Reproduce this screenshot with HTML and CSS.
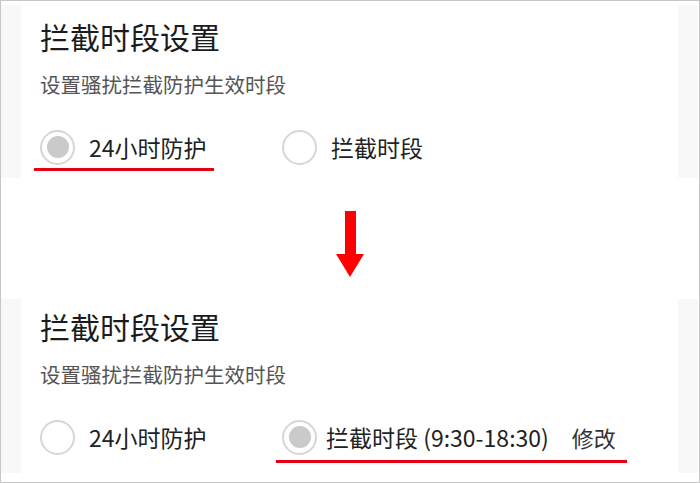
FILE: index.html
```html
<!DOCTYPE html>
<html lang="zh-CN">
<head>
    <meta charset="UTF-8">
    <meta name="viewport" content="width=device-width, initial-scale=1.0">
    <title>拦截时段设置</title>
    <link rel="stylesheet" href="styles.css">
</head>
<body>
<div class="frame">

    <!-- before -->
    <div class="screen screen-top">
        <div class="side"></div>
        <div class="card">
            <div class="card-title">拦截时段设置</div>
            <div class="card-desc">设置骚扰拦截防护生效时段</div>
            <div class="options">
                <div class="option option-first marked">
                    <span class="radio checked"></span>
                    <span class="option-label">24小时防护</span>
                </div>
                <div class="option">
                    <span class="radio"></span>
                    <span class="option-label">拦截时段</span>
                </div>
            </div>
        </div>
        <div class="side"></div>
    </div>

    <div class="arrow-row">
        <svg class="arrow" width="28" height="66" viewBox="0 0 28 66">
            <rect x="9" y="0" width="11" height="44" fill="#f00"/>
            <polygon points="0,43 28,43 14,66" fill="#f00"/>
        </svg>
    </div>

    <!-- after -->
    <div class="screen screen-bottom">
        <div class="side"></div>
        <div class="card">
            <div class="card-title">拦截时段设置</div>
            <div class="card-desc">设置骚扰拦截防护生效时段</div>
            <div class="options">
                <div class="option option-first">
                    <span class="radio"></span>
                    <span class="option-label">24小时防护</span>
                </div>
                <div class="option option-range marked">
                    <span class="radio checked"></span>
                    <span class="option-label">拦截时段 (9:30-18:30)</span>
                    <span class="option-edit">修改</span>
                </div>
            </div>
        </div>
        <div class="side"></div>
    </div>

</div>
</body>
</html>
```

FILE: styles.css
```css
* {
    box-sizing: border-box;
}

body {
    margin: 0;
    font-family: "Noto Sans CJK SC", "Noto Sans", sans-serif;
    background-color: #fff;
}

.frame {
    width: 700px;
    height: 483px;
    border: 1px solid #c6c6c6;
    padding: 4px 1px 0 0;
    background-color: #fff;
    overflow: hidden;
}

.screen {
    display: flex;
}

.screen-top {
    height: 173px;
}

.screen-bottom {
    height: 174px;
}

.side {
    width: 20px;
    background-color: #f8f8f8;
}

.card {
    flex: 1;
    background-color: #fff;
    padding: 13px 18px 0 19px;
}

.screen-bottom .card {
    padding-top: 9px;
}

.card-title {
    font-size: 30px;
    line-height: 36px;
    color: #1c1c1c;
}

.card-desc {
    margin-top: 16px;
    font-size: 20.5px;
    line-height: 28px;
    color: #555;
}

.options {
    display: flex;
    margin-top: 31px;
    margin-left: -6px;
}

.option {
    display: flex;
    align-items: center;
    height: 42px;
    padding: 0 9px 3px 6px;
    border-bottom: 3px solid transparent;
}

.option-first {
    width: 180px;
    margin-right: 62px;
}

.option.marked {
    border-bottom-color: #e60012;
}

.option-range {
    padding-right: 11px;
}

.screen-bottom .option {
    padding-bottom: 5px;
    height: 44px;
}

.radio {
    width: 35px;
    height: 35px;
    flex-shrink: 0;
    border: 2px solid #d6d6d6;
    border-radius: 50%;
    display: flex;
    align-items: center;
    justify-content: center;
}

.radio.checked::after {
    content: "";
    width: 22px;
    height: 22px;
    border-radius: 50%;
    background-color: #cacaca;
}

.option-label {
    margin-left: 14px;
    font-size: 23px;
    line-height: 30px;
    color: #222;
    white-space: nowrap;
}

.option-range .option-label {
    margin-left: 9px;
}

.option-edit {
    margin-left: 23px;
    font-size: 22px;
    line-height: 30px;
    color: #333;
}

.arrow-row {
    height: 121px;
    padding: 33px 0 0 335px;
}

.arrow {
    display: block;
}
```
